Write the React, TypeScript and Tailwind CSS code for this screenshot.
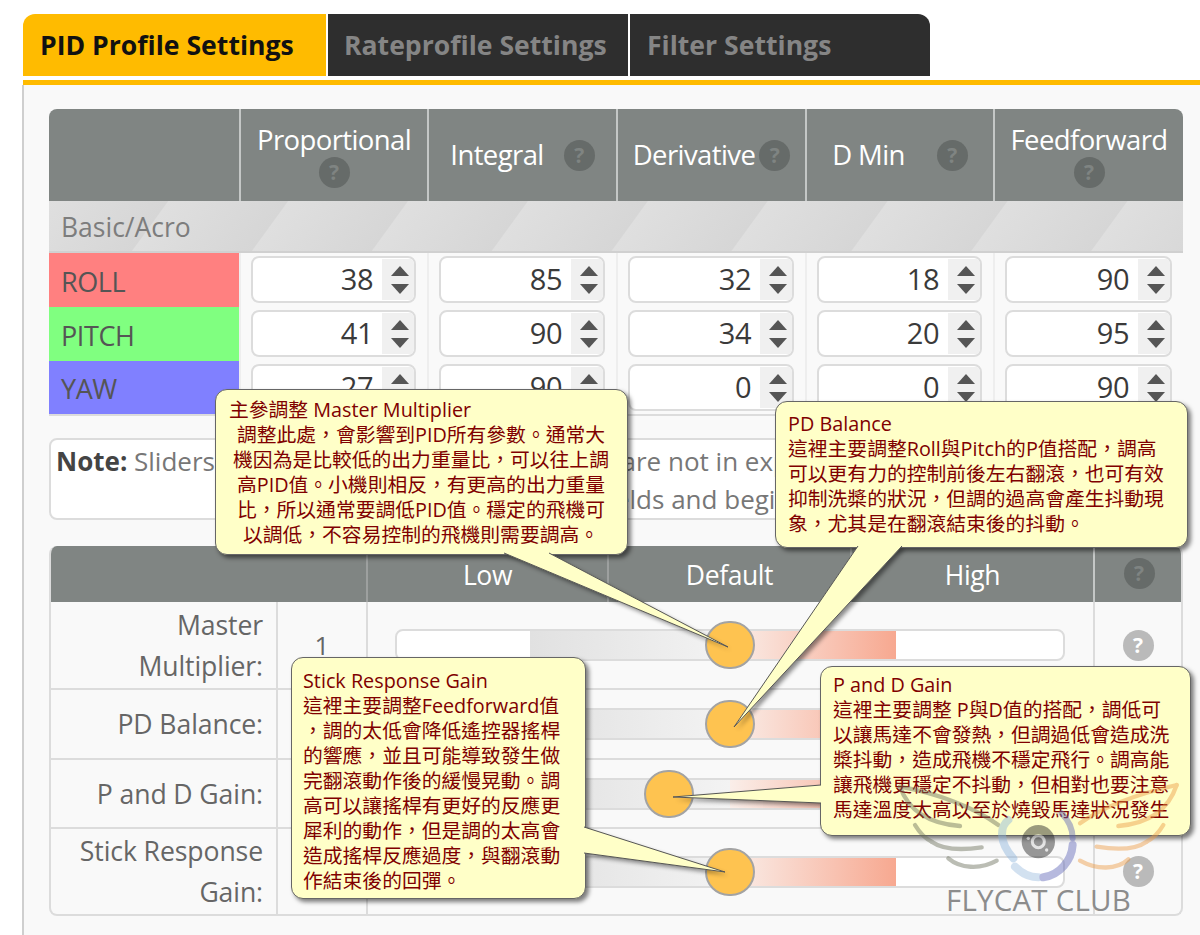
const font = "[font-family:'Open_Sans','Noto_Sans_CJK_TC',sans-serif]"

const columns = [
  { name: 'Proportional', layout: 'flex-col', gap: 'gap-0' },
  { name: 'Integral', layout: 'flex-row', gap: 'gap-[20px]' },
  { name: 'Derivative', layout: 'flex-row', gap: 'gap-[4px]' },
  { name: 'D Min', layout: 'flex-row', gap: 'gap-[32px]' },
  { name: 'Feedforward', layout: 'flex-col', gap: 'gap-0' },
]

const axes = [
  { name: 'ROLL', color: 'bg-[#ff8080]', height: 'h-[54px]', values: [38, 85, 32, 18, 90] },
  { name: 'PITCH', color: 'bg-[#80ff80]', height: 'h-[54px]', values: [41, 90, 34, 20, 95] },
  { name: 'YAW', color: 'bg-[#8080ff]', height: 'h-[53px]', values: [27, 90, 0, 0, 90] },
]

const sliders = [
  { label: ['Master', 'Multiplier:'], value: '1', height: 'h-[86px]', thumb: 'left-[50%]' },
  { label: ['PD Balance:'], value: '1', height: 'h-[70px]', thumb: 'left-[50%]' },
  { label: ['P and D Gain:'], value: '0.9', height: 'h-[69px]', thumb: 'left-[40.9%]' },
  { label: ['Stick Response', 'Gain:'], value: '1', height: 'h-[87px]', thumb: 'left-[50%]' },
]

const callouts = [
  {
    box: 'left-[215px] top-[389px] w-[413px] h-[166px] pl-[13px] pr-[14px] pt-[7px]',
    align: 'text-center',
    title: '主參調整 Master Multiplier',
    lines: [
      '調整此處，會影響到PID所有參數。通常大',
      '機因為是比較低的出力重量比，可以往上調',
      '高PID值。小機則相反，有更高的出力重量',
      '比，所以通常要調低PID值。穩定的飛機可',
      '以調低，不容易控制的飛機則需要調高。',
    ],
  },
  {
    box: 'left-[775px] top-[401px] w-[413px] h-[147px] pl-[12px] pt-[9px]',
    align: 'text-left',
    title: 'PD Balance',
    lines: [
      '這裡主要調整Roll與Pitch的P值搭配，調高',
      '可以更有力的控制前後左右翻滾，也可有效',
      '抑制洗槳的狀況，但調的過高會產生抖動現',
      '象，尤其是在翻滾結束後的抖動。',
    ],
  },
  {
    box: 'left-[291px] top-[657px] w-[295px] h-[242px] pl-[11px] pt-[10px]',
    align: 'text-left',
    title: 'Stick Response Gain',
    lines: [
      '這裡主要調整Feedforward值',
      '，調的太低會降低遙控器搖桿',
      '的響應，並且可能導致發生做',
      '完翻滾動作後的緩慢晃動。調',
      '高可以讓搖桿有更好的反應更',
      '犀利的動作，但是調的太高會',
      '造成搖桿反應過度，與翻滾動',
      '作結束後的回彈。',
    ],
  },
  {
    box: 'left-[820px] top-[666px] w-[371px] h-[170px] pl-[12px] pt-[5px]',
    align: 'text-left',
    title: 'P and D Gain',
    lines: [
      '這裡主要調整 P與D值的搭配，調低可',
      '以讓馬達不會發熱，但調過低會造成洗',
      '槳抖動，造成飛機不穩定飛行。調高能',
      '讓飛機更穩定不抖動，但相對也要注意',
      '馬達溫度太高以至於燒毀馬達狀況發生',
    ],
  },
]

// base a, tip, base b
const pointers = [
  '504,553 728,647 549,553',
  '858,546 734,727 902,546',
  '584,827 725,872 584,853',
  '821,785 673,797 821,803',
]

function Help({ dark = false, size = 'w-[31px] h-[31px]' }: { dark?: boolean; size?: string }) {
  return (
    <span
      className={`${size} shrink-0 rounded-full flex items-center justify-center text-[21px] font-bold leading-none ${
        dark ? 'bg-[#666b69] text-[#7f8482]' : 'bg-[#bababa] text-white'
      }`}
    >
      ?
    </span>
  )
}

function NumberBox({ value }: { value: number }) {
  return (
    <div className="h-[47px] flex items-stretch bg-white border-2 border-[#dcdcdc] rounded-lg overflow-hidden">
      <span className="flex-1 pr-[9px] text-right text-[29px] leading-[42px] text-[#3a3a3a] tracking-[-0.5px]">
        {value}
      </span>
      <span className="w-[32px] pl-[4px] my-[1px] bg-[#f0f0f0] flex items-center justify-center">
        <svg width="18" height="28" viewBox="0 0 18 28">
          <polygon points="9,0 18,10 0,10" fill="#555" />
          <polygon points="0,18 18,18 9,28" fill="#555" />
        </svg>
      </span>
    </div>
  )
}

function PidTable() {
  return (
    <div className="w-[1134px] rounded-t-lg overflow-hidden border-b-2 border-[#dcdcdc]">
      <div className="grid grid-cols-[190px_188px_189px_189px_188px_190px] h-[92px] bg-[#808583]">
        <div />
        {columns.map(c => (
          <div key={c.name} className={`flex items-center justify-center border-l-2 border-[#c4c7c6] ${c.layout} ${c.gap}`}>
            <span className="text-[27.5px] leading-[34px] text-white tracking-[-0.6px]">{c.name}</span>
            <Help dark />
          </div>
        ))}
      </div>
      <div className="h-[52px] px-[12px] pt-[3px] flex items-center text-[26.5px] text-[#7d7d7d] bg-[repeating-linear-gradient(126deg,#dfdfdf_0px,#d6d6d6_96px,#dfdfdf_97px)] border-b-2 border-[#d0d0d0]">
        Basic/Acro
      </div>
      {axes.map(a => (
        <div key={a.name} className={`grid grid-cols-[190px_188px_189px_189px_188px_190px] ${a.height}`}>
          <div className={`${a.color} flex items-center pl-[12px] pt-[4px] text-[27px] text-[#555] tracking-[-0.4px]`}>{a.name}</div>
          {a.values.map((v, i) => (
            <div key={i} className="pl-[10px] pr-[11px] pt-[3px] border-l-2 border-[#eeeeee]">
              <NumberBox value={v} />
            </div>
          ))}
        </div>
      ))}
    </div>
  )
}

function SliderTable() {
  return (
    <div className="w-[1134px] rounded-lg overflow-hidden border-2 border-t-0 border-[#dcdcdc]">
      <div className="grid grid-cols-[317px_241px_243px_243px_1fr] h-[56px] bg-[#808583] -mx-[2px]">
        <div />
        {['Low', 'Default', 'High'].map(t => (
          <div key={t} className="border-l-2 border-[#9da09f] flex items-center justify-center pt-[3px] text-[26.5px] text-white tracking-[-0.4px]">
            {t}
          </div>
        ))}
        <div className="border-l-2 border-[#c4c7c6] flex items-center justify-center pb-[2px]">
          <Help dark />
        </div>
      </div>
      {sliders.map((s, i) => (
        <div key={s.label[0]} className={`grid grid-cols-[225px_90px_727px_1fr] ${s.height} ${i > 0 ? 'border-t-2 border-[#dcdcdc]' : ''}`}>
          <div className="pr-[13px] pt-[1px] flex flex-col justify-center items-end text-[26.6px] leading-[41px] text-[#666] tracking-[-0.1px]">
            {s.label.map(l => <span key={l}>{l}</span>)}
          </div>
          <div className="border-l-2 border-[#dcdcdc] flex items-center justify-center text-[26px] text-[#666]">{s.value}</div>
          <div className="border-l-2 border-[#dcdcdc] flex items-center pl-[27px] pr-[28px]">
            <div className="relative flex-1 h-[32px] rounded-lg border-2 border-[#dcdcdc] bg-[linear-gradient(to_right,#ffffff_20%,#e1e1e1_20%,#f3f3f3_50%,#faeee9_50%,#f7a890_75%,#ffffff_75%)]">
              <span className={`absolute ${s.thumb} top-1/2 -translate-x-1/2 -translate-y-1/2 w-[50px] h-[48px] rounded-full bg-[#fec350] border-2 border-[#a3a3a3]`} />
            </div>
          </div>
          <div className="border-l-2 border-[#dcdcdc] flex items-center justify-center">
            <Help />
          </div>
        </div>
      ))}
    </div>
  )
}

function Watermark() {
  return (
    <>
      <svg className="absolute left-[880px] top-[770px] z-40 opacity-45 pointer-events-none" width="320" height="165" viewBox="0 0 960 495" fill="none" strokeLinecap="round">
        <g stroke="#6a6f5a" strokeWidth="13">
          <path d="M60 50 C85 120 140 160 240 168" />
          <path d="M60 50 C170 70 280 110 355 165" />
          <path d="M155 215 C190 240 250 240 305 232" />
          <path d="M105 165 C120 190 135 205 155 215" />
          <path d="M205 265 C240 295 300 300 350 272" />
        </g>
        <g stroke="#ec9b45" strokeWidth="13">
          <path d="M890 45 C865 120 810 160 715 168" />
          <path d="M890 45 C780 70 670 110 600 160" />
          <path d="M800 215 C765 240 710 240 650 230" />
          <path d="M850 165 C835 190 820 205 800 215" />
          <path d="M745 268 C710 300 650 300 600 272" />
        </g>
        <path d="M400 265 C355 215 360 170 385 150" stroke="#8cb4dc" strokeWidth="24" />
        <path d="M475 322 C445 322 425 310 405 290" stroke="#9dbde0" strokeWidth="24" />
        <path d="M490 322 C540 315 575 270 578 225" stroke="#5f66b8" strokeWidth="24" />
        <path d="M578 205 C578 175 565 150 545 130" stroke="#5f66b8" strokeWidth="18" />
        <circle cx="475" cy="215" r="50" fill="#222" />
        <circle cx="475" cy="215" r="18" fill="none" stroke="#cfcfcf" strokeWidth="9" />
        <circle cx="445" cy="205" r="5" fill="#cfcfcf" />
        <circle cx="500" cy="240" r="5" fill="#cfcfcf" />
      </svg>
      <span className="absolute left-[946px] top-[881px] z-40 text-[29.5px] leading-[38px] font-medium text-[#8c8c8c] tracking-[0.2px]">
        FLYCAT CLUB
      </span>
    </>
  )
}

export default function App() {
  return (
    <div className={`${font} relative w-[1200px] h-[935px] overflow-hidden bg-white`}>
      <div className="flex gap-[2px] pl-[23px] pt-[14px]">
        <div className="w-[303px] h-[62px] rounded-tl-xl bg-[#ffbb00] flex items-center pl-[17px] pt-[2px] text-[26.6px] font-bold text-[#111]">
          PID Profile Settings
        </div>
        <div className="w-[300px] h-[62px] bg-[#2e2e2e] flex items-center pl-[16px] pt-[2px] text-[26.6px] font-bold text-[#858585]">
          Rateprofile Settings
        </div>
        <div className="w-[300px] h-[62px] rounded-tr-xl bg-[#2e2e2e] flex items-center pl-[17px] pt-[2px] text-[26.6px] font-bold text-[#858585]">
          Filter Settings
        </div>
      </div>
      <div className="mt-[4px] ml-[23px] h-[5px] bg-[#ffbb00]" />
      <div className="ml-[22px] h-[850px] border-l-2 border-[#cfcfcf] bg-[#f9f9f9] pl-[25px] pt-[24px]">
        <PidTable />
        <div className="w-[1134px] h-[82px] mt-[22px] mb-[26px] bg-white border-2 border-[#dcdcdc] rounded-lg pl-[5px] pt-[2px] text-[26px] leading-[38px] text-[#777] whitespace-nowrap overflow-hidden">
          <b className="text-[#444]">Note:</b> Sliders are disabled because the values <span className="ml-[7px]">are not in expert mode.</span>
          <br />
          <span className="ml-[374px]">Use the input fields and begin tuning from there.</span>
        </div>
        <SliderTable />
      </div>

      {/* callout tails with their shadow sit under the boxes */}
      <svg className="absolute inset-0 z-10 pointer-events-none drop-shadow-[3px_3px_2px_rgba(0,0,0,0.45)]" width="1200" height="935">
        {pointers.map(p => <polygon key={p} points={p} fill="#ffffc8" />)}
      </svg>
      {callouts.map(c => (
        <div
          key={c.title}
          className={`absolute z-20 ${c.box} bg-[#ffffc8] border border-[#666] rounded-xl shadow-[3px_3px_4px_rgba(0,0,0,0.5)] text-[19.8px] leading-[25px] text-[#800000] whitespace-nowrap`}
        >
          <div>{c.title}</div>
          {c.lines.map(l => <div key={l} className={c.align}>{l}</div>)}
        </div>
      ))}
      <svg className="absolute inset-0 z-30 pointer-events-none" width="1200" height="935">
        {pointers.map(p => (
          <g key={p}>
            <polygon points={p} fill="#ffffc8" />
            <polyline points={p} fill="none" stroke="#555" strokeWidth="1" />
          </g>
        ))}
      </svg>
      <Watermark />
    </div>
  )
}
